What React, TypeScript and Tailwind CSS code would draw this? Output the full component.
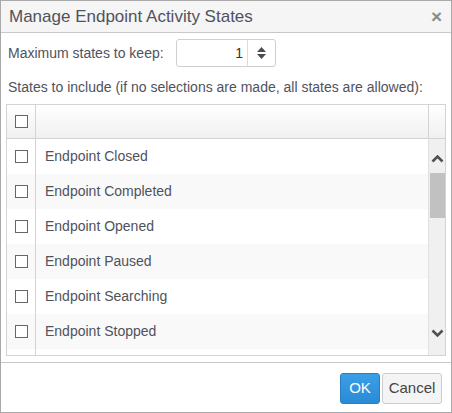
import React from "react";

const states = [
  "Endpoint Closed",
  "Endpoint Completed",
  "Endpoint Opened",
  "Endpoint Paused",
  "Endpoint Searching",
  "Endpoint Stopped",
];

const font = "font-['Liberation_Sans',Arial,sans-serif]";

function Box() {
  return <span className="block h-[13px] w-[13px] border border-[#666] bg-white" />;
}

function Chevron({ down = false }: { down?: boolean }) {
  return (
    <svg width="13" height="9" viewBox="0 0 13 9" className={down ? "rotate-180" : ""}>
      <path d="M1.5 7.5 L6.5 2.5 L11.5 7.5" fill="none" stroke="#505050" strokeWidth="2.6" />
    </svg>
  );
}

export default function App() {
  return (
    <div className={`${font} flex h-[413px] w-[452px] flex-col border border-[#a9a9a9] bg-white text-[#50525c]`}>
      <div className="flex h-[32px] shrink-0 items-center justify-between border-b border-[#c8c8c8] bg-[#f5f5f5] pl-[8px] pr-[9px]">
        <span className="text-[17px] leading-none">Manage Endpoint Activity States</span>
        <span className="text-[19px] font-bold leading-none text-[#8a8a8a]">×</span>
      </div>

      <div className="flex flex-1 flex-col px-[5px] pb-[6px]">
        <div className="mt-[6px] flex h-[28px] items-center">
          <span className="w-[170px] pl-[2px] text-[14px]">Maximum states to keep:</span>
          <div className="flex h-[28px] w-[100px] rounded-[3px] border border-[#cfcfcf] bg-white">
            <span className="flex flex-1 items-center justify-end pr-[4px] text-[14px] text-[#333]">1</span>
            <span className="flex w-[28px] flex-col items-center justify-center gap-[2px] border-l border-[#dcdcdc]">
              <svg width="9" height="5" viewBox="0 0 9 5"><path d="M0 5 L4.5 0 L9 5 Z" fill="#4a4c56" /></svg>
              <svg width="9" height="5" viewBox="0 0 9 5"><path d="M0 0 L4.5 5 L9 0 Z" fill="#4a4c56" /></svg>
            </span>
          </div>
        </div>

        <div className="mt-[12px] pl-[2px] text-[14px] leading-[16px]">
          States to include (if no selections are made, all states are allowed):
        </div>

        <div className="mt-[9px] flex h-[252px] w-[440px] flex-col border border-[#d3d3d3]">
          <div className="flex h-[34px] shrink-0 border-b border-[#d3d3d3] bg-gradient-to-b from-white to-[#f0f0f0]">
            <div className="flex w-[29px] items-center justify-center border-r border-[#d3d3d3] pl-[1px]">
              <Box />
            </div>
            <div className="flex-1" />
            <div className="w-[17px] border-l border-[#d3d3d3]" />
          </div>
          <div className="flex flex-1">
            <div className="flex flex-1 flex-col">
              {states.map((s, i) => (
                <div key={s} className={`flex h-[35px] ${i % 2 === 1 ? "bg-[#f9f9f9]" : "bg-white"}`}>
                  <div className="flex w-[29px] items-center justify-center border-r border-[#d3d3d3] pl-[1px]">
                    <Box />
                  </div>
                  <div className="flex items-center pl-[9px] text-[14px]">{s}</div>
                </div>
              ))}
              <div className="flex flex-1">
                <div className="w-[29px] border-r border-[#d3d3d3]" />
              </div>
            </div>
            <div className="flex w-[17px] flex-col border-l border-[#e0e0e0] bg-[#f0f0f0]">
              <div className="flex h-[34px] items-center justify-center pt-[4px]">
                <Chevron />
              </div>
              <div className="ml-[1px] h-[45px] w-[15px] bg-[#c1c1c1]" />
              <div className="flex-1" />
              <div className="flex h-[34px] items-center justify-center pb-[10px]">
                <Chevron down />
              </div>
            </div>
          </div>
        </div>
      </div>

      <div className="flex h-[51px] shrink-0 items-start justify-end gap-[2px] border-t border-[#c8c8c8] pr-[9px] pt-[10px]">
        <button className="h-[31px] w-[40px] rounded-[3px] border border-[#2b7cc0] bg-gradient-to-b from-[#3aa0e6] to-[#2a8ad6] text-[15px] text-white">
          OK
        </button>
        <button className="h-[31px] w-[60px] rounded-[3px] border border-[#cccccc] bg-[#f4f4f4] text-[15px] text-[#444]">
          Cancel
        </button>
      </div>
    </div>
  );
}
